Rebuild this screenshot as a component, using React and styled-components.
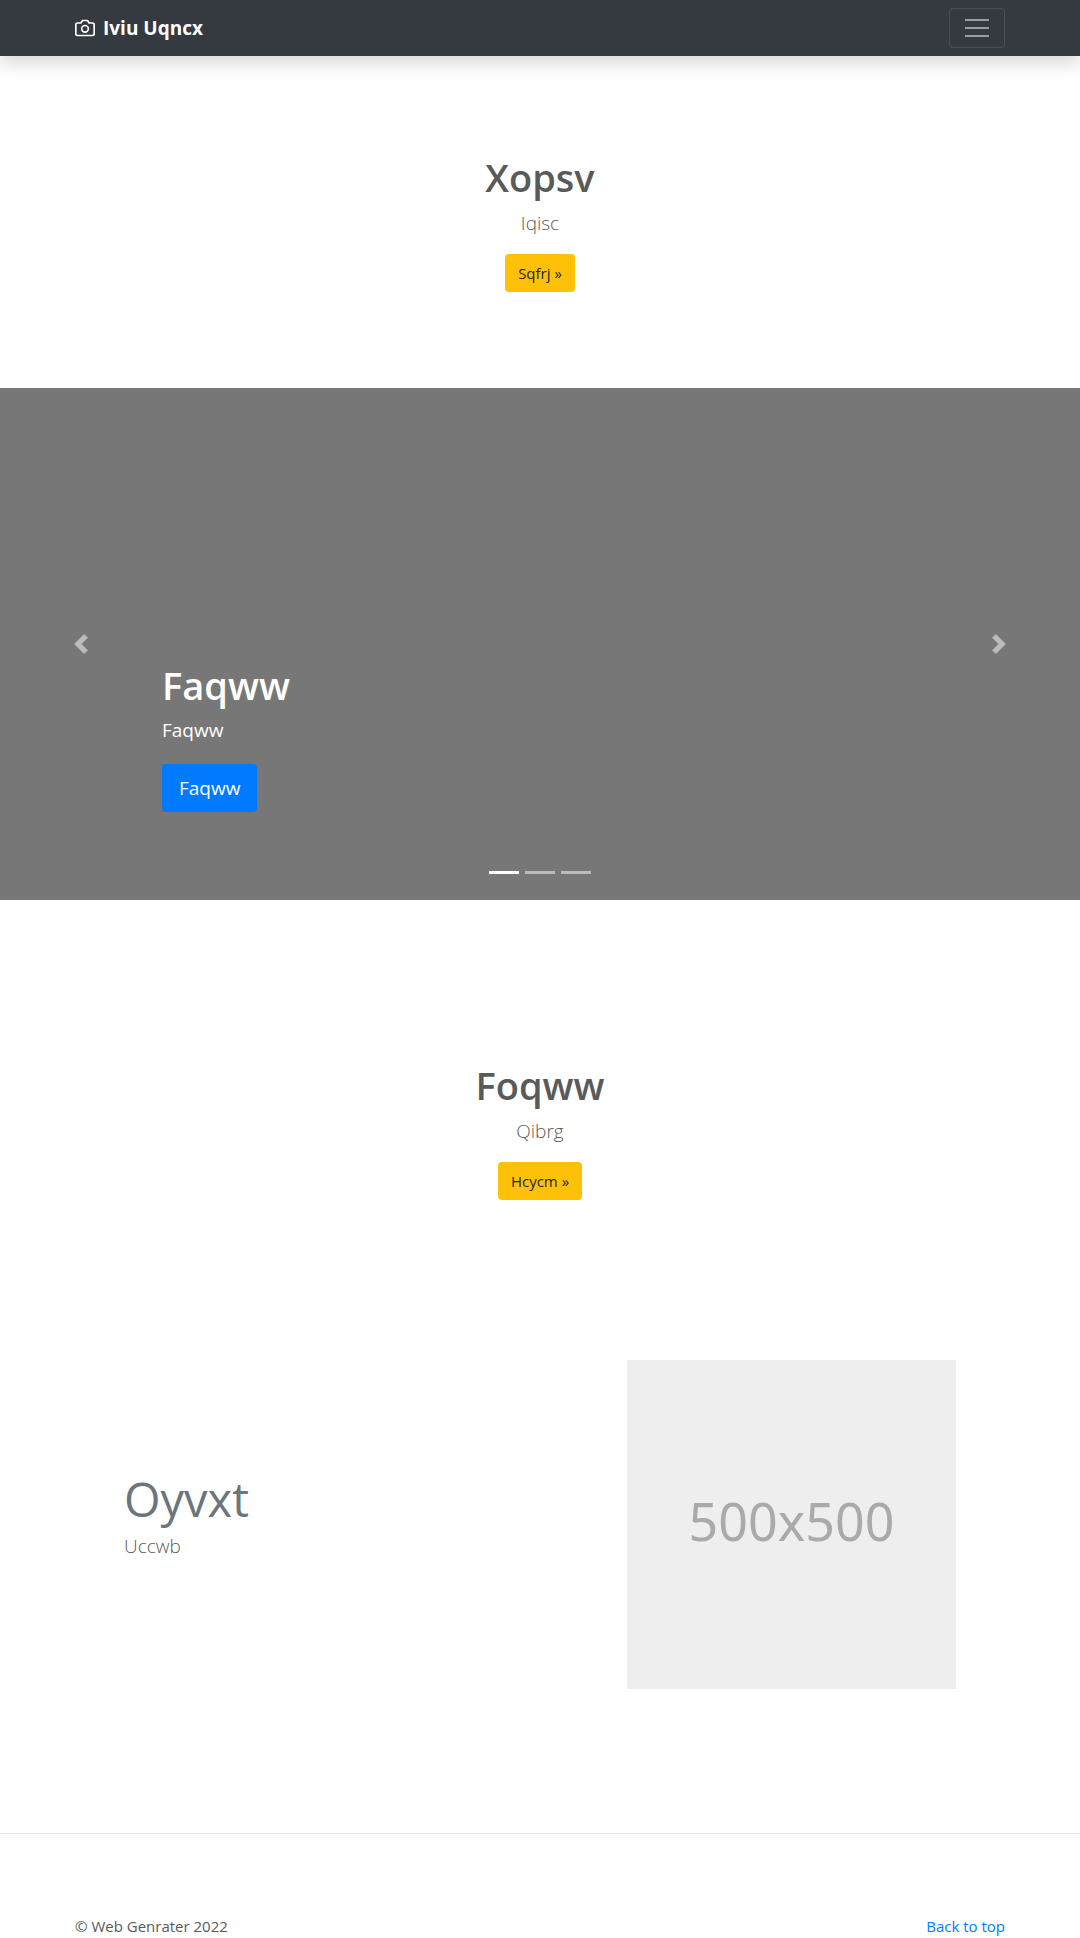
import React from 'react';
import styled, { createGlobalStyle } from 'styled-components';

const GlobalStyle = createGlobalStyle`
  *, *::before, *::after { box-sizing: border-box; }
  body {
    margin: 0;
    background: #fff;
    color: #5a5a5a;
    font-family: "Open Sans", "Noto Sans", sans-serif;
    font-size: 15px;
    line-height: 24px;
  }
  h1, h2, p { margin: 0; }
  a { color: #007bff; text-decoration: none; }
`;

const Container = styled.div`
  width: 100%;
  max-width: 960px;
  margin: 0 auto;
  padding: 0 ${({ $gutter = 15 }) => $gutter}px;
`;

const Navbar = styled.header`
  position: relative;
  background: #343a40;
  box-shadow: 0 8px 16px rgba(0, 0, 0, 0.15);
`;

const NavRow = styled(Container)`
  display: flex;
  align-items: center;
  justify-content: space-between;
  min-height: 56px;
`;

const Brand = styled.a`
  display: flex;
  align-items: center;
  gap: 8px;
  color: #fff;
  font-size: 19px;
  font-weight: 700;
  line-height: 30px;
`;

const Toggler = styled.button`
  display: flex;
  padding: 4px 12px;
  border: 1px solid rgba(255, 255, 255, 0.1);
  border-radius: 4px;
  background: transparent;
  color: rgba(255, 255, 255, 0.5);
`;

const Hero = styled.section`
  display: flex;
  flex-direction: column;
  align-items: center;
  padding: 96px 16px;
  text-align: center;
`;

const Title = styled.h1`
  margin-bottom: 6px;
  font-size: 38px;
  font-weight: 600;
  line-height: 50px;
`;

const Lead = styled.p`
  margin-bottom: 16px;
  font-size: 19px;
  font-weight: 300;
  line-height: 30px;
`;

const Button = styled.a`
  display: inline-block;
  padding: ${({ $large }) => ($large ? '9px 17px' : '7px 13px')};
  border-radius: 4px;
  background: ${({ $primary }) => ($primary ? '#007bff' : '#ffc107')};
  color: ${({ $primary }) => ($primary ? '#fff' : '#212529')};
  font-size: ${({ $large }) => ($large ? 19 : 15)}px;
  line-height: ${({ $large }) => ($large ? 30 : 24)}px;
`;

const Carousel = styled.section`
  position: relative;
  display: grid;
  grid-template-columns: 15% 1fr 15%;
  height: 512px;
  margin-bottom: 64px;
  background: #777;
  color: #fff;
`;

const Arrow = styled.button`
  display: flex;
  align-items: center;
  justify-content: center;
  padding: 0;
  border: 0;
  background: transparent;
  color: #fff;
  opacity: 0.5;
`;

const Caption = styled.div`
  align-self: end;
  padding-bottom: 88px;
`;

const CaptionText = styled.p`
  margin-bottom: 20px;
  font-size: 19px;
  line-height: 28px;
`;

const Indicators = styled.div`
  position: absolute;
  right: 0;
  bottom: 26px;
  left: 0;
  display: flex;
  justify-content: center;
  gap: 6px;
`;

const Indicator = styled.button`
  width: 30px;
  height: 3px;
  padding: 0;
  border: 0;
  background: #fff;
  opacity: ${({ $active }) => ($active ? 1 : 0.5)};
`;

const Featurette = styled.section`
  display: grid;
  grid-template-columns: 7fr 5fr;
  align-items: center;
  margin: 64px -15px 144px;
`;

const Cell = styled.div`
  padding: 0 15px;
`;

const FeatureTitle = styled.h2`
  margin-bottom: 6px;
  color: #6c757d;
  font-size: 47px;
  font-weight: 400;
  line-height: 52px;
`;

const Placeholder = styled.div`
  display: flex;
  align-items: center;
  justify-content: center;
  aspect-ratio: 1;
  padding-bottom: 8px;
  background: #eee;
  color: #aaa;
  font-family: "Noto Sans", sans-serif;
  font-size: 52px;
`;

const Footer = styled.footer`
  padding-top: 80px;
  border-top: 1px solid #e5e5e5;
`;

const FooterRow = styled(Container)`
  display: flex;
  justify-content: space-between;
`;

function CameraIcon() {
  return (
    <svg width="20" height="20" viewBox="0 0 24 24" fill="none" stroke="currentColor" strokeWidth="2" strokeLinecap="round" strokeLinejoin="round" aria-hidden="true">
      <path d="M23 19a2 2 0 0 1-2 2H3a2 2 0 0 1-2-2V8a2 2 0 0 1 2-2h4l2-3h6l2 3h4a2 2 0 0 1 2 2z" />
      <circle cx="12" cy="13" r="4" />
    </svg>
  );
}

function MenuIcon() {
  return (
    <svg width="30" height="30" viewBox="0 0 30 30" stroke="currentColor" strokeWidth="2" aria-hidden="true">
      <path d="M3 7h24M3 15h24M3 23h24" />
    </svg>
  );
}

function Chevron({ next }) {
  return (
    <svg width="20" height="20" viewBox="0 0 8 8" fill="currentColor" aria-hidden="true">
      <path d={next ? 'M2.75 0l-1.5 1.5 2.5 2.5-2.5 2.5 1.5 1.5 4-4-4-4z' : 'M5.25 0l-4 4 4 4 1.5-1.5-2.5-2.5 2.5-2.5-1.5-1.5z'} />
    </svg>
  );
}

function Intro({ title, text, action }) {
  return (
    <Hero>
      <Title>{title}</Title>
      <Lead>{text}</Lead>
      <Button href="#">{action} »</Button>
    </Hero>
  );
}

export default function App() {
  return (
    <>
      <GlobalStyle />
      <Navbar id="top">
        <NavRow>
          <Brand href="#">
            <CameraIcon />
            Iviu Uqncx
          </Brand>
          <Toggler type="button" aria-label="Toggle navigation">
            <MenuIcon />
          </Toggler>
        </NavRow>
      </Navbar>
      <main>
        <Intro title="Xopsv" text="Iqisc" action="Sqfrj" />
        <Carousel>
          <Arrow type="button" aria-label="Previous"><Chevron /></Arrow>
          <Caption>
            <Title as="h2">Faqww</Title>
            <CaptionText>Faqww</CaptionText>
            <Button href="#" $large $primary>Faqww</Button>
          </Caption>
          <Arrow type="button" aria-label="Next"><Chevron next /></Arrow>
          <Indicators>
            {[0, 1, 2].map((i) => (
              <Indicator key={i} type="button" aria-label={`Slide ${i + 1}`} $active={i === 0} />
            ))}
          </Indicators>
        </Carousel>
        <Intro title="Foqww" text="Qibrg" action="Hcycm" />
        <Container $gutter={64}>
          <Featurette>
            <Cell>
              <FeatureTitle>Oyvxt</FeatureTitle>
              <Lead>Uccwb</Lead>
            </Cell>
            <Cell>
              <Placeholder>500x500</Placeholder>
            </Cell>
          </Featurette>
        </Container>
      </main>
      <Footer>
        <FooterRow>
          <p>© Web Genrater 2022</p>
          <a href="#top">Back to top</a>
        </FooterRow>
      </Footer>
    </>
  );
}
